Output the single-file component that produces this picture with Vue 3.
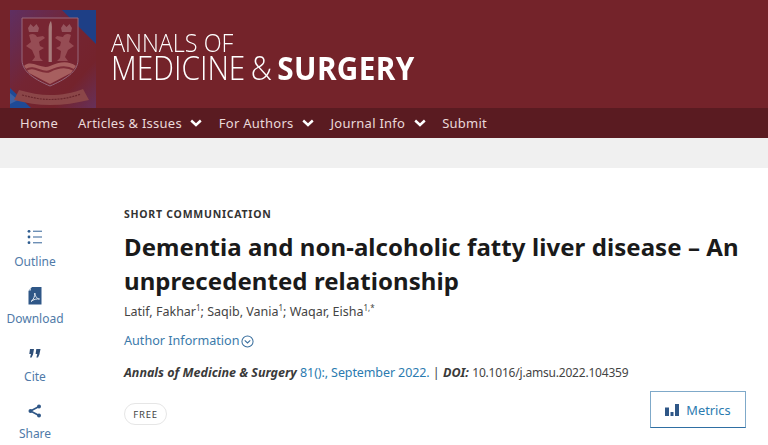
<script setup>
const navItems = [
  { label: 'Home', caret: false },
  { label: 'Articles & Issues', caret: true },
  { label: 'For Authors', caret: true },
  { label: 'Journal Info', caret: true },
  { label: 'Submit', caret: false }
]
const rail = ['Outline', 'Download', 'Cite', 'Share']
</script>

<template>
  <div class="page">
    <header class="masthead">
      <svg class="crest" viewBox="0 0 86 98" width="86" height="98">
        <defs>
          <linearGradient id="bg" x1="0" y1="0" x2="1" y2="1">
            <stop offset="0" stop-color="#5f2f62"/>
            <stop offset="0.45" stop-color="#742533"/>
            <stop offset="0.75" stop-color="#74232c"/>
            <stop offset="1" stop-color="#66305a"/>
          </linearGradient>
        </defs>
        <rect width="86" height="98" fill="url(#bg)"/>
        <path d="M52 0H86V34Z" fill="#1e3f86"/>
        <path d="M0 78L21 98H0Z" fill="#1e4a96"/>
        <path d="M0 83L8 90L0 94Z" fill="#4a6aa6" opacity=".75"/>
        <path d="M12 8H68V50C68 62 54 70 40 76C26 70 12 62 12 50Z" fill="#772532" stroke="#97697c" stroke-width="1"/>
        <path d="M14 56C22 49 31 60 40 56C49 52 58 50 66 56L61 63L40 74L19 63Z" fill="#a75f5f"/>
        <path d="M16 60C24 54 32 65 40 61C48 57 57 56 64 60" fill="none" stroke="#7f2d38" stroke-width="2"/>
        <path d="M38.600 52V19C38.600 15 40 12 41 11C42.400 15 41.800 19 41.800 23V52Z" fill="#a87c7c"/>
        <path d="M18 18L20.500 14L23.500 17L26.500 14L29 18L28 22H19Z" fill="#96565f"/>
        <path d="M51 18L53.500 14L56.500 17L59.500 14L62 18L61 22H52Z" fill="#96565f"/>
        <path d="M19 25C22 23 26 24 27 27L33 26L35 28L29 32L30 36L34 38L29 41L30 48L33 51H22L25 47L22 40L16 36L21 32Z" fill="#964c54"/>
        <path d="M61 25C58 23 54 24 53 27L47 26L45 28L51 32L50 36L46 38L51 41L50 48L47 51H58L55 47L58 40L64 36L59 32Z" fill="#964c54"/>
        <path d="M9 80C20 83 30 85 40 85C52 85 62 83 73 79L79 90C66 93 54 95 40 95C28 95 16 93 4 90Z" fill="#8b4648"/>
        <path d="M12 85C24 88 32 89.500 40 89.500C50 89.500 60 88 71 84" fill="none" stroke="#69262c" stroke-width="1.200" stroke-dasharray="2 1"/>
      </svg>
      <div class="wordmark">
        <div class="wm-top">ANNALS OF</div>
        <div class="wm-bottom">MEDICINE &amp; <b>SURGERY</b></div>
      </div>
    </header>

    <nav class="nav">
      <a v-for="item in navItems" :key="item.label" class="nav-item" :class="{ plain: !item.caret }">
        <span>{{ item.label }}</span>
        <svg v-if="item.caret" class="caret" viewBox="0 0 12 8" width="12" height="8">
          <path d="M1.200 1.500L6 6L10.800 1.500" fill="none" stroke="#fff" stroke-width="2.400"/>
        </svg>
      </a>
    </nav>

    <div class="band"></div>

    <div class="content">
      <aside class="rail">
        <div v-for="name in rail" :key="name" class="rail-item">
          <span class="rail-icon">
            <svg v-if="name === 'Outline'" class="outline-icon" viewBox="0 0 16 16" width="16" height="16">
              <g fill="#2e5c8f">
                <circle cx="2" cy="2.300" r="1.400"/><circle cx="2" cy="8" r="1.400"/><circle cx="2" cy="13.700" r="1.400"/>
              </g>
              <g fill="#6d8fb5">
                <rect x="6" y="1.600" width="9" height="1.400"/><rect x="6" y="7.300" width="9" height="1.400"/><rect x="6" y="13" width="9" height="1.400"/>
              </g>
            </svg>
            <svg v-else-if="name === 'Download'" viewBox="0 0 14 18" width="14" height="18">
              <path d="M4 0H13.500V17.500H0.500V4Z" fill="#2f5787"/>
              <path d="M3 0.500V3.500H0.500Z" fill="#b9c9db"/>
              <path d="M3 14.500C5.500 13 7 9 6.800 6C7 9 9 12 11.500 12C9 11.600 5.500 12.300 3 14.500Z" fill="none" stroke="#dfe7f0" stroke-width="1"/>
            </svg>
            <svg v-else-if="name === 'Cite'" viewBox="0 0 12 9" width="12" height="9">
              <path d="M1 0H5L4 5.500L2.600 8.500H1L2 5H0.300Z" fill="#2f4f78"/>
              <path d="M7.300 0H11.500L10.400 5.500L9 8.500H7.400L8.300 5H6.600Z" fill="#2f4f78"/>
            </svg>
            <svg v-else viewBox="0 0 14 14" width="14" height="14">
              <path d="M11 2.500L2.500 7L11 11.500" fill="none" stroke="#2f5787" stroke-width="1.600"/>
              <circle cx="11" cy="2.500" r="2" fill="#2f5787"/><circle cx="2.500" cy="7" r="2" fill="#2f5787"/><circle cx="11" cy="11.500" r="2" fill="#2f5787"/>
            </svg>
          </span>
          <span class="rail-label">{{ name }}</span>
        </div>
      </aside>

      <main class="article">
        <div class="kicker">SHORT COMMUNICATION</div>
        <h1 class="title">Dementia and non-alcoholic fatty liver disease – An unprecedented relationship</h1>
        <div class="authors">Latif, Fakhar<sup>1</sup>; Saqib, Vania<sup>1</sup>; Waqar, Eisha<sup>1,*</sup></div>
        <div class="info">Author Information<svg viewBox="0 0 14 14" width="13" height="13"><circle cx="7" cy="7" r="6" fill="none" stroke="#3a6f9e" stroke-width="1.100"/><path d="M4 5.800L7 8.600L10 5.800" fill="none" stroke="#3a6f9e" stroke-width="1.200"/></svg></div>
        <div class="citation"><b><i>Annals of Medicine &amp; Surgery</i></b> <span class="link">81():, September 2022.</span> | <b><i>DOI:</i></b> <span class="doi">10.1016/j.amsu.2022.104359</span></div>
        <div class="foot">
          <span class="pill">FREE</span>
          <button class="metrics">
            <svg viewBox="0 0 14 12" width="14" height="12"><rect x="0" y="3.500" width="4" height="8.500" fill="#2f5787"/><rect x="5.500" y="8" width="3" height="4" fill="#2f5787"/><rect x="10" y="0" width="4" height="12" fill="#2f5787"/></svg>
            Metrics
          </button>
        </div>
      </main>
    </div>
  </div>
</template>

<style>
html, body { margin: 0; background: #fff; overflow: hidden; }
</style>

<style scoped>
.page {
  width: 768px;
  height: 445px;
  overflow: hidden;
  font-family: "Noto Sans", "Open Sans", sans-serif;
  color: #3a3a3a;
}
.masthead {
  height: 108px;
  background: #74232a;
  display: flex;
  box-sizing: border-box;
  padding: 10px 0 0 10px;
}
.crest { display: block; flex: none; filter: blur(0.4px); }
.wordmark {
  margin: 20px 0 0 15px;
  color: #fff;
  font-family: "Open Sans", sans-serif;
  font-weight: 300;
  transform: scaleX(0.9);
  transform-origin: left top;
}
.wm-top { font-size: 26px; line-height: 24px; }
.wm-bottom { font-size: 33px; line-height: 27px; white-space: nowrap; word-spacing: -2.500px; }
.wm-bottom b { font-weight: 700; letter-spacing: 0.400px; }
.nav {
  height: 30px;
  background: #5a1b21;
  display: flex;
  align-items: center;
  padding-left: 20px;
  gap: 16.500px;
  color: #ead9da;
  font-size: 13px;
  letter-spacing: 0.250px;
}
.nav-item { display: flex; align-items: center; gap: 8.500px; }
.nav-item.plain { padding-right: 3.500px; }
.caret { display: block; }
.band { height: 30px; background: #f0f0f0; }
.content { display: flex; padding-top: 38px; }
.rail {
  width: 124px;
  flex: none;
  box-sizing: border-box;
  padding: 22px 54px 0 0;
  display: flex;
  flex-direction: column;
  gap: 15.300px;
}
.rail-item {
  display: flex;
  flex-direction: column;
  align-items: center;
  width: 70px;
  height: 42px;
}
.rail-icon { height: 26px; display: flex; align-items: center; justify-content: center; }
.outline-icon { margin-bottom: 4px; }
.rail-label { font-size: 12px; line-height: 16px; margin-top: 4px; color: #4f7aa8; }
.article { width: 625px; flex: none; }
.kicker { font-size: 10.500px; font-weight: 700; letter-spacing: 0.750px; line-height: 16px; color: #333; }
.title {
  margin: 8px 0 0;
  font-size: 24px;
  line-height: 34px;
  font-weight: 700;
  color: #1a1a1a;
  font-family: "Noto Sans", sans-serif;
  letter-spacing: 0.070px;
}
.authors { margin-top: 4px; font-size: 12.500px; line-height: 20px; color: #444; white-space: nowrap; }
.authors sup { font-size: 8px; line-height: 0; }
.info { margin-top: 9px; font-size: 12.600px; line-height: 20px; color: #3a7aaa; display: flex; align-items: center; gap: 1px; }
.citation { margin-top: 12px; font-size: 12.500px; line-height: 20px; color: #444; white-space: nowrap; }
.citation b { color: #3a3a3a; }
.doi { font-size: 12px; letter-spacing: -0.200px; }
.link { color: #2b7bb0; letter-spacing: -0.100px; }
.foot { display: flex; justify-content: space-between; align-items: flex-start; width: 622px; margin-top: 9px; }
.pill {
  margin-top: 11px;
  box-sizing: border-box;
  width: 43px;
  height: 22px;
  border: 1.500px solid #e6e6e6;
  border-radius: 11px;
  font-size: 9.500px;
  letter-spacing: 0.800px;
  display: flex;
  align-items: center;
  justify-content: center;
  color: #444;
}
.metrics {
  box-sizing: border-box;
  width: 96px;
  height: 37px;
  margin-top: -1px;
  background: #fff;
  border: 1px solid #7fa9c9;
  border-bottom-color: #2f6fa3;
  display: flex;
  align-items: center;
  justify-content: center;
  gap: 7px;
  font: 12.800px "Noto Sans", sans-serif;
  color: #2b7bb0;
  padding: 0;
}
</style>
